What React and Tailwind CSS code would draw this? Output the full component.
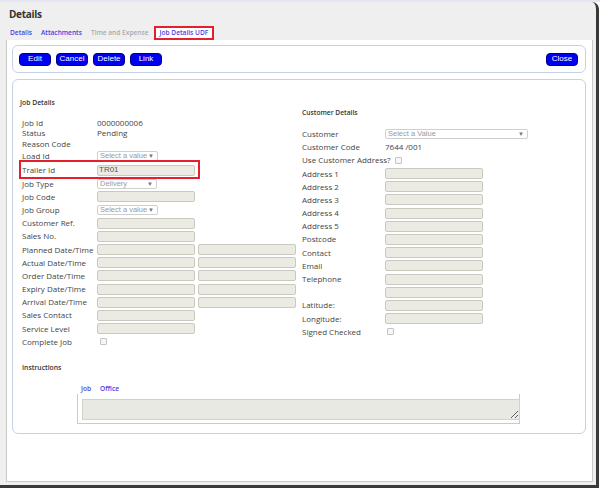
import React from 'react';

const labelCls = "font-['Open_Sans',sans-serif] text-[8px] text-[#444] leading-none whitespace-nowrap";

const Input = ({ value, w = 'w-[98px]' }) => (
  <div className={`${w} h-[11px] bg-[#ebebe4] border border-[#c9c9c0] rounded-[2px] flex items-center px-[1px] font-['Liberation_Sans',sans-serif] text-[8px] text-[#555] leading-none`}>
    {value}
  </div>
);

const Select = ({ text, w = 'w-[61px]' }) => (
  <div className={`${w} h-[10px] bg-white border border-[#cfcfcf] rounded-[2px] flex items-center pl-[2px] pr-[3px] font-['Liberation_Sans',sans-serif] text-[7.5px] text-[#9a9a9a] leading-none`}>
    <span>{text}</span>
    <span className="ml-auto text-[6px] text-[#777]">▼</span>
  </div>
);

const Check = () => (
  <div className="w-[7px] h-[7px] border border-[#c4c4c4] rounded-[1px] bg-[#f6f6f6]" />
);

const Row = ({ label, children, h = 'h-[13.2px]', lw = 'w-[75px]' }) => (
  <div className={`flex items-center ${h}`}>
    <div className={`${lw} ${labelCls}`}>{label}</div>
    {children}
  </div>
);

const Button = ({ children }) => (
  <button className="w-[32px] h-[13px] bg-[#0000f0] border border-[#00007a] rounded-[4px] text-white font-['Liberation_Sans',sans-serif] text-[8px] leading-none flex items-center justify-center">
    {children}
  </button>
);

const dateRows = ['Planned Date/Time', 'Actual Date/Time', 'Order Date/Time', 'Expiry Date/Time', 'Arrival Date/Time'];
const addressRows = ['Address 1', 'Address 2', 'Address 3', 'Address 4', 'Address 5', 'Postcode', 'Contact', 'Email', 'Telephone', ''];

export default function App() {
  return (
    <div className="w-[600px] h-[490px] bg-white overflow-hidden">
      <div className="h-[2px] bg-[#e4e4f2]" />
      <div className="w-[599px] h-[486px] bg-[#efefef] rounded-tr-[7px] border-r-[3px] border-b-[3px] border-[#3a3a3a] flex flex-col">
        {/* Title */}
        <div className="h-[24px] pt-[6px] pl-[9px] font-['Open_Sans',sans-serif] text-[10px] font-bold leading-[12px] text-[#333] tracking-[-0.3px]">
          Details
        </div>

        {/* Tabs */}
        <div className="h-[14px] flex items-center pl-[10px] font-['Open_Sans',sans-serif] text-[6.6px] font-semibold leading-none">
          <span className="text-[#4b3ee0]">Details</span>
          <span className="ml-[9px] text-[#4b3ee0]">Attachments</span>
          <span className="ml-[9px] text-[#aaaaaa]">Time and Expense</span>
          <span className="ml-[5px] h-[14px] px-[4px] flex items-center bg-white border-2 border-[#e4202e] text-[#4b3ee0]">Job Details UDF</span>
        </div>

        {/* Content */}
        <div className="flex-1 ml-[6px] w-[587px] mb-[3px] bg-white border-l border-r border-b border-[#c9c9c9] pt-[5px] pl-[5px]">
          {/* Toolbar */}
          <div className="w-[574px] h-[28px] border border-[#c4d2e8] rounded-[6px] flex items-center pl-[6px] pr-[7px] gap-[5px]">
            <Button>Edit</Button>
            <Button>Cancel</Button>
            <Button>Delete</Button>
            <Button>Link</Button>
            <div className="ml-auto">
              <Button>Close</Button>
            </div>
          </div>

          {/* Main panel */}
          <div className="mt-[6px] w-[574px] h-[355px] border border-[#c4d2e8] rounded-[6px] flex flex-col">
            <div className="flex">
              {/* Left column */}
              <div className="w-[289px] pl-[7px]">
                <div className="mt-[18px] mb-[9.5px] h-[10px] font-['Open_Sans',sans-serif] text-[6.8px] font-semibold leading-[10px] text-[#333]">
                  Job Details
                </div>
                <div className="pl-[2px]">
                  <Row label="Job Id" h="h-[10.5px]"><span className={labelCls}>0000000006</span></Row>
                  <Row label="Status" h="h-[10.5px]"><span className={labelCls}>Pending</span></Row>
                  <Row label="Reason Code" h="h-[10.5px]" />
                  <Row label="Load Id" h="h-[14px]"><Select text="Select a value" /></Row>
                  <div className="relative">
                    <Row label="Trailer Id" h="h-[14px]"><Input value="TR01" /></Row>
                    <div className="absolute -left-[3px] -top-[3px] w-[181px] h-[19px] border-2 border-[#e4202e]" />
                  </div>
                  <Row label="Job Type"><Select text="Delivery" w="w-[60px]" /></Row>
                  <Row label="Job Code"><Input /></Row>
                  <Row label="Job Group"><Select text="Select a value" /></Row>
                  <Row label="Customer Ref."><Input /></Row>
                  <Row label="Sales No."><Input /></Row>
                  {dateRows.map((l) => (
                    <Row key={l} label={l}>
                      <Input />
                      <div className="ml-[3px]"><Input /></div>
                    </Row>
                  ))}
                  <Row label="Sales Contact"><Input /></Row>
                  <Row label="Service Level"><Input /></Row>
                  <Row label="Complete Job"><div className="ml-[3px]"><Check /></div></Row>
                </div>
              </div>

              {/* Right column */}
              <div className="flex-1">
                <div className="mt-[28px] mb-[9.4px] h-[10px] font-['Open_Sans',sans-serif] text-[6.7px] font-semibold leading-[10px] text-[#333]">
                  Customer Details
                </div>
                <Row label="Customer" lw="w-[83px]"><Select text="Select a Value" w="w-[143px]" /></Row>
                <Row label="Customer Code" lw="w-[83px]"><span className={labelCls}>7644 /001</span></Row>
                <div className="flex items-center h-[13.2px]">
                  <span className={labelCls}>Use Customer Address?</span>
                  <div className="ml-[4px]"><Check /></div>
                </div>
                {addressRows.map((l, i) => (
                  <Row key={i} label={l} lw="w-[83px]"><Input /></Row>
                ))}
                <Row label="Latitude:" lw="w-[83px]"><Input /></Row>
                <Row label="Longitude:" lw="w-[83px]"><Input /></Row>
                <Row label="Signed Checked" lw="w-[83px]"><div className="ml-[2px]"><Check /></div></Row>
              </div>
            </div>

            {/* Instructions */}
            <div className="mt-[15px] ml-[9px] h-[10px] font-['Open_Sans',sans-serif] text-[6.8px] font-semibold leading-[10px] text-[#333]">
              Instructions
            </div>
            <div className="mt-[11px] ml-[68px] h-[10px] flex items-center font-['Open_Sans',sans-serif] text-[6.6px] font-semibold leading-none text-[#4b3ee0]">
              <span>Job</span>
              <span className="ml-[9px]">Office</span>
            </div>
            <div className="ml-[64px] w-[443px] border-l border-r border-b border-[#cbcbcb] pt-[5px] pl-[4px] pb-[3px]">
              <textarea
                readOnly
                className="block w-[438px] h-[21px] bg-[#e9e9e3] border border-[#d2d2cb] outline-none"
              />
            </div>
          </div>
        </div>
      </div>
    </div>
  );
}
